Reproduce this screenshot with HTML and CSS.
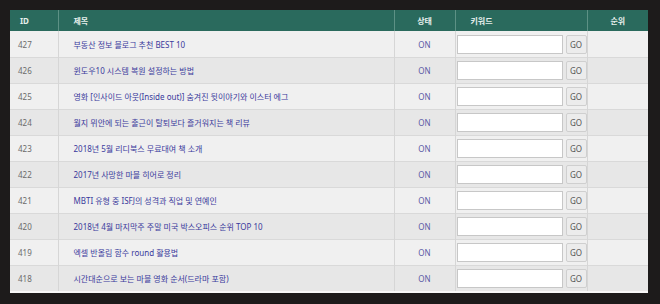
FILE: index.html
```html
<!DOCTYPE html>
<html lang="ko">
<head>
<meta charset="utf-8">
<link rel="stylesheet" href="styles.css">
</head>
<body>
<div class="frame">
  <table class="list">
    <colgroup>
      <col class="c-id"><col class="c-title"><col class="c-state"><col class="c-kw"><col class="c-rank">
    </colgroup>
    <thead>
      <tr>
        <th class="left">ID</th>
        <th class="left title-h">제목</th>
        <th>상태</th>
        <th class="left kw-h">키워드</th>
        <th>순위</th>
      </tr>
    </thead>
    <tbody>
      <tr><td class="id">427</td><td class="title">부동산 정보 블로그 추천 BEST 10</td><td class="state">ON</td><td class="kw"><span class="kwbox"><input class="kwin" type="text"><button class="go">GO</button></span></td><td></td></tr>
      <tr><td class="id">426</td><td class="title">윈도우10 시스템 복원 설정하는 방법</td><td class="state">ON</td><td class="kw"><span class="kwbox"><input class="kwin" type="text"><button class="go">GO</button></span></td><td></td></tr>
      <tr><td class="id">425</td><td class="title">영화 [인사이드 아웃(Inside out)] 숨겨진 뒷이야기와 이스터 에그</td><td class="state">ON</td><td class="kw"><span class="kwbox"><input class="kwin" type="text"><button class="go">GO</button></span></td><td></td></tr>
      <tr><td class="id">424</td><td class="title">월지 뮈안에 되는 출근이 탈퇴보다 즐거워지는 책 리뷰</td><td class="state">ON</td><td class="kw"><span class="kwbox"><input class="kwin" type="text"><button class="go">GO</button></span></td><td></td></tr>
      <tr><td class="id">423</td><td class="title">2018년 5월 리디북스 무료대여 책 소개</td><td class="state">ON</td><td class="kw"><span class="kwbox"><input class="kwin" type="text"><button class="go">GO</button></span></td><td></td></tr>
      <tr><td class="id">422</td><td class="title">2017년 사망한 마블 히어로 정리</td><td class="state">ON</td><td class="kw"><span class="kwbox"><input class="kwin" type="text"><button class="go">GO</button></span></td><td></td></tr>
      <tr><td class="id">421</td><td class="title">MBTI 유형 중 ISFJ의 성격과 직업 및 연예인</td><td class="state">ON</td><td class="kw"><span class="kwbox"><input class="kwin" type="text"><button class="go">GO</button></span></td><td></td></tr>
      <tr><td class="id">420</td><td class="title">2018년 4월 마지막주 주말 미국 박스오피스 순위 TOP 10</td><td class="state">ON</td><td class="kw"><span class="kwbox"><input class="kwin" type="text"><button class="go">GO</button></span></td><td></td></tr>
      <tr><td class="id">419</td><td class="title">엑셀 반올림 함수 round 활용법</td><td class="state">ON</td><td class="kw"><span class="kwbox"><input class="kwin" type="text"><button class="go">GO</button></span></td><td></td></tr>
      <tr><td class="id">418</td><td class="title">시간대순으로 보는 마블 영화 순서(드라마 포함)</td><td class="state">ON</td><td class="kw"><span class="kwbox"><input class="kwin" type="text"><button class="go">GO</button></span></td><td></td></tr>
    </tbody>
  </table>
</div>
</body>
</html>
```
FILE: styles.css
```css
html, body {
  margin: 0;
  padding: 0;
  background: #1d1b1b;
  height: 304px;
  overflow: hidden;
}
body {
  font-family: "Noto Sans", "Noto Sans CJK KR", sans-serif;
  font-size: 8px;
}
.frame {
  padding: 10px 12px 0 10px;
}
.list {
  width: 638px;
  border-collapse: collapse;
  table-layout: fixed;
  background: #f6f6f6;
  border-bottom: 2px solid #f8f8f8;
}
.c-id { width: 48px; }
.c-title { width: 336px; }
.c-state { width: 61px; }
.c-kw { width: 132px; }
.c-rank { width: 61px; }

thead th {
  background: #2a6a5d;
  color: #e6efec;
  font-weight: bold;
  font-size: 8px;
  height: 21px;
  padding: 0;
  text-align: center;
  border-left: 1px solid #5d9185;
}
thead th:first-child { border-left: none; }
thead th.left { text-align: left; padding-left: 10px; }
thead th.title-h { padding-left: 15px; }
thead th.kw-h { padding-left: 15px; }

tbody td {
  height: 25px;
  padding: 0;
  border-top: 1px solid #d9d9d9;
  border-left: 1px solid #d6d6d6;
  vertical-align: middle;
}
tbody tr:first-child td { border-top: none; height: 26px; }
tbody td:first-child { border-left: none; }
tbody tr:nth-child(odd) td { background: #f0f0f0; }
tbody tr:nth-child(even) td { background: #e7e7e7; }

td.id { color: #6b6b6b; padding-left: 8px; }
td.title { color: #3a3a9c; padding-left: 15px; white-space: nowrap; overflow: hidden; }
td.state { color: #5b5ba6; text-align: center; }
td.kw { padding-left: 1px; }
.kwbox {
  display: flex;
  align-items: center;
  gap: 3px;
}
.kwin {
  box-sizing: border-box;
  width: 106px;
  height: 19px;
  margin: 0;
  padding: 0 3px;
  border: 1px solid #c7c7c7;
  background: #fff;
  outline: none;
}
.go {
  box-sizing: border-box;
  width: 21px;
  height: 19px;
  margin: 0;
  padding: 0;
  border: 1px solid #cfcfcf;
  border-radius: 2px;
  background: #ececec;
  color: #555;
  font-family: "Noto Sans", sans-serif;
  font-size: 8px;
}
```
